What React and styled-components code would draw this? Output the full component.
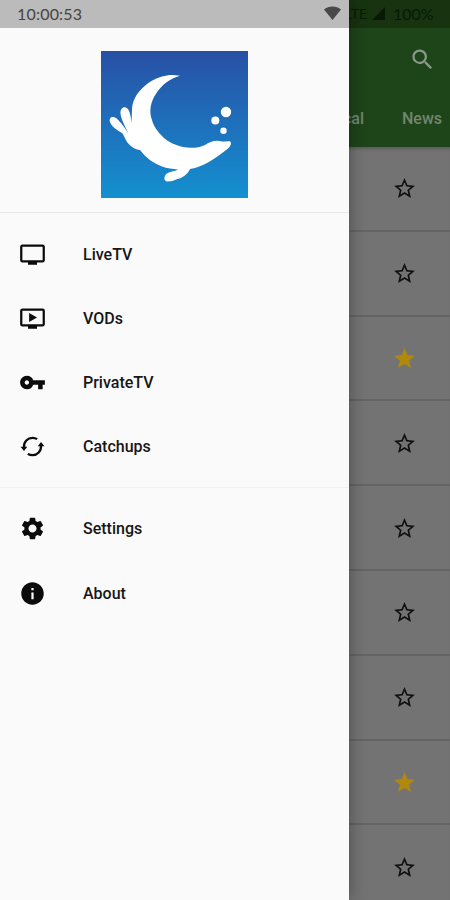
import React from 'react';
import styled, { createGlobalStyle } from 'styled-components';
import { MdTv, MdOndemandVideo, MdVpnKey, MdSettings, MdInfo, MdSearch, MdStar, MdStarBorder } from 'react-icons/md';

const favourites = [false, false, true, false, false, false, false, true, false];

const SealLogo = () => (
  <Logo viewBox="0 0 147 147">
    <defs>
      <linearGradient id="sea" x1="0" y1="0" x2="0" y2="1">
        <stop offset="0" stopColor="#2850a5" />
        <stop offset="0.5" stopColor="#1e70bb" />
        <stop offset="1" stopColor="#1490cf" />
      </linearGradient>
    </defs>
    <rect width="147" height="147" fill="url(#sea)" />
    <g fill="#fff">
      <path d="M79 24.800C73 23.500 67 23.500 61 25.500C53 28 47 31.500 42 36.500C35 43 31.500 50 31 58L30.500 72C30 67 29 60 26.500 57.500C23 54.500 19 57.500 19.500 62.500C20 68 23 73 27.500 82.500C24 77 19 70 15 67C11 64.500 7.500 67 9 71C10.500 76 17 79.500 21 82C23 84 24 88 26 91C30 96 34 98.500 39 99C45 107 52 112 61 115.500C66 117.500 72 118 77 118.500C75 120 69 120.500 66 122.500C62.500 125 62.500 130.500 66.500 130.500C70 130.500 73 129.500 75 128.500C82 127 87 123 89 118C96 117 102 114 107 111.500C115 107 121 102 127 97.500C129.500 95.500 131 91.500 129 90.500C127 89.500 124 91 121 90.500C115 88.500 109 90.500 104 94C98 97 89 97.500 82 96C74 94 67 91 62 86C56 80 52.500 75 51 69C48 61 49 51 55.500 42C61 33.500 69 28 79 24.800Z" />
      <circle cx="125" cy="61" r="5.200" />
      <circle cx="114.300" cy="69.500" r="4" />
      <circle cx="122.500" cy="79.700" r="3.200" />
    </g>
  </Logo>
);

const LoopIcon = () => (
  <svg viewBox="0 0 26 26" fill="none" stroke="#0b0b0b" strokeWidth="2.2">
    <path d="M4.800 14C4.300 8.500 8.500 4.600 13 4.600C15 4.600 16.200 5 17.500 5.900" />
    <path d="M21.200 12C21.700 17.500 17.500 21.400 13 21.400C11 21.400 9.800 21 8.500 20.100" />
    <path d="M1.500 13.300H8L4.800 17.300Z" fill="#0b0b0b" stroke="none" />
    <path d="M18 12.700H24.500L21.200 8.700Z" fill="#0b0b0b" stroke="none" />
  </svg>
);

const MenuItem = ({ icon, label }) => (
  <Item>
    <ItemIcon>{icon}</ItemIcon>
    <span>{label}</span>
  </Item>
);

const App = () => (
  <Screen>
    <GlobalStyle />
    <Page>
      <PageStatus>
        <span>LTE</span>
        <svg width="13" height="13" viewBox="0 0 13 13"><path d="M13 0V13H0Z" fill="#081a06" /></svg>
        <Battery>100%</Battery>
      </PageStatus>
      <Toolbar>
        <MdSearch size={27} />
      </Toolbar>
      <Tabs>
        <span>Local</span>
        <span>News</span>
      </Tabs>
      <Channels>
        {favourites.map((starred, i) => (
          <Channel key={i} $starred={starred}>
            {starred ? <MdStar size={25} /> : <MdStarBorder size={25} />}
          </Channel>
        ))}
      </Channels>
    </Page>
    <Drawer>
      <DrawerStatus>
        <span>10:00:53</span>
        <svg width="17" height="14" viewBox="0 0 17 14"><path d="M0 3.500C4.500 -0.500 12.500 -0.500 17 3.500L8.500 14Z" fill="#484848" /></svg>
      </DrawerStatus>
      <DrawerHeader>
        <SealLogo />
      </DrawerHeader>
      <Menu>
        <MenuItem icon={<MdTv />} label="LiveTV" />
        <MenuItem icon={<MdOndemandVideo />} label="VODs" />
        <MenuItem icon={<MdVpnKey />} label="PrivateTV" />
        <MenuItem icon={<LoopIcon />} label="Catchups" />
      </Menu>
      <Menu>
        <MenuItem icon={<MdSettings />} label="Settings" />
        <MenuItem icon={<MdInfo />} label="About" />
      </Menu>
    </Drawer>
  </Screen>
);

const GlobalStyle = createGlobalStyle`
  * {
    box-sizing: border-box;
  }
  body {
    margin: 0;
    font-family: Roboto, sans-serif;
  }
  svg {
    display: block;
    flex-shrink: 0;
  }
`;

const Screen = styled.div`
  position: relative;
  width: 450px;
  height: 900px;
  overflow: hidden;
`;

const Page = styled.div`
  display: flex;
  flex-direction: column;
  height: 100%;
  background: #737373;
`;

const PageStatus = styled.div`
  display: flex;
  align-items: center;
  justify-content: flex-end;
  height: 28px;
  padding: 0 15px 1px 0;
  background: #17330f;
  color: #081a06;
  font-family: Lato, sans-serif;
  font-size: 14px;
  span {
    margin-right: 5px;
  }
`;

const Battery = styled.div`
  width: 42px;
  margin-left: 8px;
  font-size: 16px;
`;

const Toolbar = styled.div`
  display: flex;
  align-items: center;
  justify-content: flex-end;
  height: 64px;
  padding: 0 14px 1px 0;
  background: #1e441a;
  color: #8a9a88;
`;

const Tabs = styled.div`
  display: flex;
  align-items: center;
  justify-content: flex-end;
  gap: 38px;
  height: 55px;
  padding: 0 8px 2px 0;
  background: #1e441a;
  color: #73866f;
  font-size: 16px;
  font-weight: 500;
`;

const Channels = styled.div`
  flex: 1;
  overflow: hidden;
  box-shadow: inset 0 4px 3px -2px #5c5c5c;
`;

const Channel = styled.div`
  display: flex;
  align-items: center;
  justify-content: flex-end;
  height: 84.800px;
  padding: 1px 33px 0 0;
  border-bottom: 2px solid #646464;
  color: ${props => (props.$starred ? '#b0880c' : '#101010')};
`;

const Drawer = styled.div`
  position: absolute;
  top: 0;
  left: 0;
  width: 349px;
  height: 100%;
  background: #fafafa;
  box-shadow: 0 0 16px rgba(0, 0, 0, 0.35);
`;

const DrawerStatus = styled.div`
  display: flex;
  align-items: center;
  justify-content: space-between;
  height: 28px;
  padding: 0 8px 2px 17px;
  background: #bbb;
  color: #444;
  font-family: Lato, sans-serif;
  font-size: 16px;
  letter-spacing: 0.2px;
`;

const DrawerHeader = styled.div`
  display: flex;
  justify-content: center;
  height: 185px;
  padding-top: 23px;
  border-bottom: 1px solid #e8e8e8;
`;

const Logo = styled.svg`
  width: 147px;
  height: 147px;
`;

const Menu = styled.div`
  padding: 9px 0 8px;
  & + & {
    border-top: 1px solid #f0f0f0;
  }
`;

const Item = styled.div`
  display: flex;
  align-items: center;
  height: 64.200px;
  padding-left: 19px;
  color: #161616;
  font-size: 16px;
  font-weight: 500;
`;

const ItemIcon = styled.div`
  width: 64px;
  color: #0b0b0b;
  svg {
    width: 27px;
    height: 27px;
  }
`;

export default App;
